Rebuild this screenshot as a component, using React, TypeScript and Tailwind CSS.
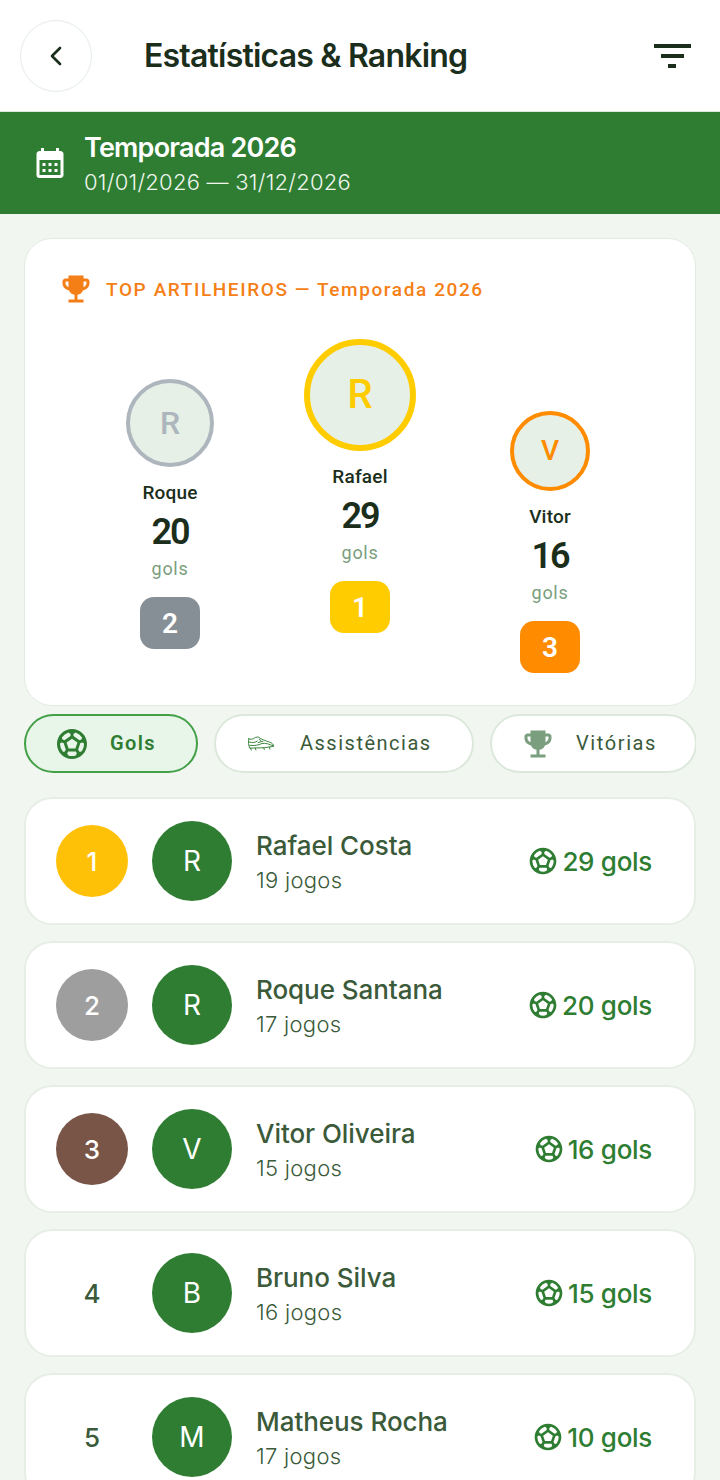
import React from 'react';
import { ChevronLeft } from 'lucide-react';
import { MdCalendarMonth, MdEmojiEvents, MdOutlineSportsSoccer } from 'react-icons/md';

const display = "[font-family:Inter,sans-serif]";
const roboto = "[font-family:Roboto,sans-serif]";

const BootIcon = ({ className }: { className?: string }) => (
  <svg viewBox="0 0 30 16" className={className} fill="none" stroke="currentColor" strokeWidth="1" strokeLinejoin="round" strokeLinecap="round">
    <path d="M2 3 C4 4 6.5 3.6 9 1.5 L12 1 C15 3.5 20 5 24 6.5 C27 7.5 28.5 9 28.5 11 L19 12.5 L3 13 C1.5 10 1.2 6 2 3 Z" />
    <path d="M2.5 6.5 C6 7.5 9 7 11 5.5 M3 10 C8 10.5 12 10 16 8 C20 7 24 9 28 10.5" />
    <path d="M12 7 L17 5.5 M13 3.5 L15 5" />
    <path d="M4 13 L4.5 15 M9 13 L9.5 15 M18 12.5 L18.5 14.5 M24 12 L24.5 14" />
  </svg>
);

const podium = [
  { name: 'Roque', letter: 'R', value: 20, rank: 2, mb: 'mb-[24px]', avatar: 'w-[88px] h-[88px] border-[4px] border-[#ADB5BD] text-[#ADB5BD] text-[32px]', badge: 'bg-[#868E96]' },
  { name: 'Rafael', letter: 'R', value: 29, rank: 1, mb: 'mb-[40px]', avatar: 'w-[112px] h-[112px] border-[6px] border-[#FFCC00] text-[#FFCC00] text-[40px]', badge: 'bg-[#FFCC00]' },
  { name: 'Vitor', letter: 'V', value: 16, rank: 3, mb: 'mb-0', avatar: 'w-[80px] h-[80px] border-[4px] border-[#FF8C00] text-[#FF8C00] text-[28px]', badge: 'bg-[#FF8C00]' },
];

const rows = [
  { rank: 1, medal: 'bg-[#FFC107]', letter: 'R', name: 'Rafael Costa', games: '19 jogos', goals: '29 gols' },
  { rank: 2, medal: 'bg-[#9E9E9E]', letter: 'R', name: 'Roque Santana', games: '17 jogos', goals: '20 gols' },
  { rank: 3, medal: 'bg-[#795548]', letter: 'V', name: 'Vitor Oliveira', games: '15 jogos', goals: '16 gols' },
  { rank: 4, medal: '', letter: 'B', name: 'Bruno Silva', games: '16 jogos', goals: '15 gols' },
  { rank: 5, medal: '', letter: 'M', name: 'Matheus Rocha', games: '17 jogos', goals: '10 gols' },
];

export default function App() {
  return (
    <div className={`w-[720px] h-[1480px] overflow-hidden bg-[#F1F6F1] ${display}`}>
      {/* Header */}
      <div className="h-[112px] bg-white border-b border-[#DCE8DC] pl-[20px] pr-[28px] flex items-center">
        <button className="w-[72px] h-[72px] rounded-full border border-[#E4ECE4] flex items-center justify-center text-[#1B2E1B]">
          <ChevronLeft size={32} strokeWidth={2} />
        </button>
        <h1 className="ml-[52px] pt-[1px] text-[32px] font-semibold tracking-[-0.8px] text-[#1B2E1B]">Estatísticas &amp; Ranking</h1>
        <div className="ml-auto mr-[1px] w-[38px] flex flex-col items-center gap-[6px]">
          <div className="w-[37px] h-[4px] bg-[#1B2E1B]" />
          <div className="w-[23px] h-[4px] bg-[#1B2E1B]" />
          <div className="w-[8px] h-[4px] bg-[#1B2E1B]" />
        </div>
      </div>

      {/* Season banner */}
      <div className="h-[102px] bg-[#2E7D32] pl-[32px] flex items-center text-white">
        <MdCalendarMonth size={36} />
        <div className="ml-[16px] pt-[2px] flex flex-col">
          <span className="text-[27px] leading-[36px] font-semibold tracking-[-0.8px]">Temporada 2026</span>
          <span className="text-[22px] leading-[32px] font-light tracking-[0.25px] text-[#EEF6EE]">01/01/2026 — 31/12/2026</span>
        </div>
      </div>

      <div className="px-[24px] pt-[24px]">
        {/* Podium */}
        <div className="h-[468px] rounded-[28px] bg-white border border-[#E2EBE2] pt-[30px]">
          <div className="pl-[33px] flex items-center h-[40px]">
            <MdEmojiEvents size={36} className="text-[#F57F17]" />
            <span className={`ml-[12px] pt-[3px] text-[19px] font-medium tracking-[1.6px] text-[#F57F17] ${roboto}`}>TOP ARTILHEIROS — Temporada 2026</span>
          </div>
          <div className={`mt-[30px] h-[334px] flex items-end justify-center ${roboto}`}>
            {podium.map((p) => (
              <div key={p.rank} className={`w-[190px] flex flex-col items-center ${p.mb}`}>
                <div className={`rounded-full bg-[#E6F0E6] flex items-center justify-center font-medium ${p.avatar}`}>{p.letter}</div>
                <div className="mt-[12px] h-[28px] text-[19px] leading-[28px] font-medium tracking-[0.2px] text-[#1B2E1B]">{p.name}</div>
                <div className="mt-[5px] h-[39px] text-[36px] leading-[40px] font-semibold tracking-[-2px] text-[#1B2E1B]">{p.value}</div>
                <div className="mt-[4px] h-[28px] text-[18px] leading-[28px] tracking-[0.7px] text-[#7A9E7E]">gols</div>
                <div className={`mt-[14px] pt-[1px] w-[60px] h-[52px] rounded-[14px] flex items-center justify-center text-white text-[28px] font-semibold ${p.badge}`}>{p.rank}</div>
              </div>
            ))}
          </div>
        </div>

        {/* Tabs */}
        <div className={`mt-[8px] h-[59px] flex gap-[16px] overflow-hidden ${roboto}`}>
          <div className="w-[174px] pb-[2px] shrink-0 rounded-full border-[2px] border-[#43A047] bg-[#E8F5E9] pl-[28px] flex items-center text-[#2E7D32]">
            <MdOutlineSportsSoccer size={36} className="mt-[2px]" />
            <span className="ml-[20px] text-[20px] font-semibold tracking-[1.4px]">Gols</span>
          </div>
          <div className="w-[260px] pb-[2px] shrink-0 rounded-full border-[2px] border-[#DCE8DC] bg-white pl-[31px] flex items-center text-[#3A5A3A]">
            <BootIcon className="w-[28px] h-[15px] mt-[2px] text-[#2E7D32]" />
            <span className="ml-[25px] text-[20px] tracking-[1.5px]">Assistências</span>
          </div>
          <div className="w-[207px] pb-[2px] shrink-0 rounded-full border-[2px] border-[#DCE8DC] bg-white pl-[28px] flex items-center text-[#3A5A3A]">
            <MdEmojiEvents size={36} className="mt-[2px] text-[#7A9E7E]" />
            <span className="ml-[20px] text-[20px] tracking-[1.6px]">Vitórias</span>
          </div>
        </div>

        {/* Ranking list */}
        <div className="mt-[24px] flex flex-col gap-[16px]">
          {rows.map((r) => (
            <div key={r.rank} className="h-[128px] shrink-0 rounded-[28px] bg-white border-[2px] border-[#E6EEE6] pl-[30px] pr-[42px] flex items-center">
              <div className={`w-[72px] h-[72px] rounded-full flex items-center justify-center text-[26px] font-medium ${r.medal ? `text-white ${r.medal}` : 'text-[#3A5A3A]'}`}>{r.rank}</div>
              <div className="ml-[24px] w-[80px] h-[80px] rounded-full bg-[#2E7D32] text-white flex items-center justify-center text-[28px]">{r.letter}</div>
              <div className="ml-[24px] pt-[1px] flex flex-col">
                <span className="text-[26px] leading-[34px] font-medium tracking-[-0.05px] text-[#3A5A3A]">{r.name}</span>
                <span className="mt-[2px] text-[22px] leading-[30px] font-light tracking-[0.3px] text-[#3A5A3A]">{r.games}</span>
              </div>
              <div className="ml-auto flex items-center gap-[3px] text-[#2E7D32]">
                <MdOutlineSportsSoccer size={32} />
                <span className="text-[26px] font-medium tracking-[-0.3px]">{r.goals}</span>
              </div>
            </div>
          ))}
        </div>
      </div>
    </div>
  );
}
